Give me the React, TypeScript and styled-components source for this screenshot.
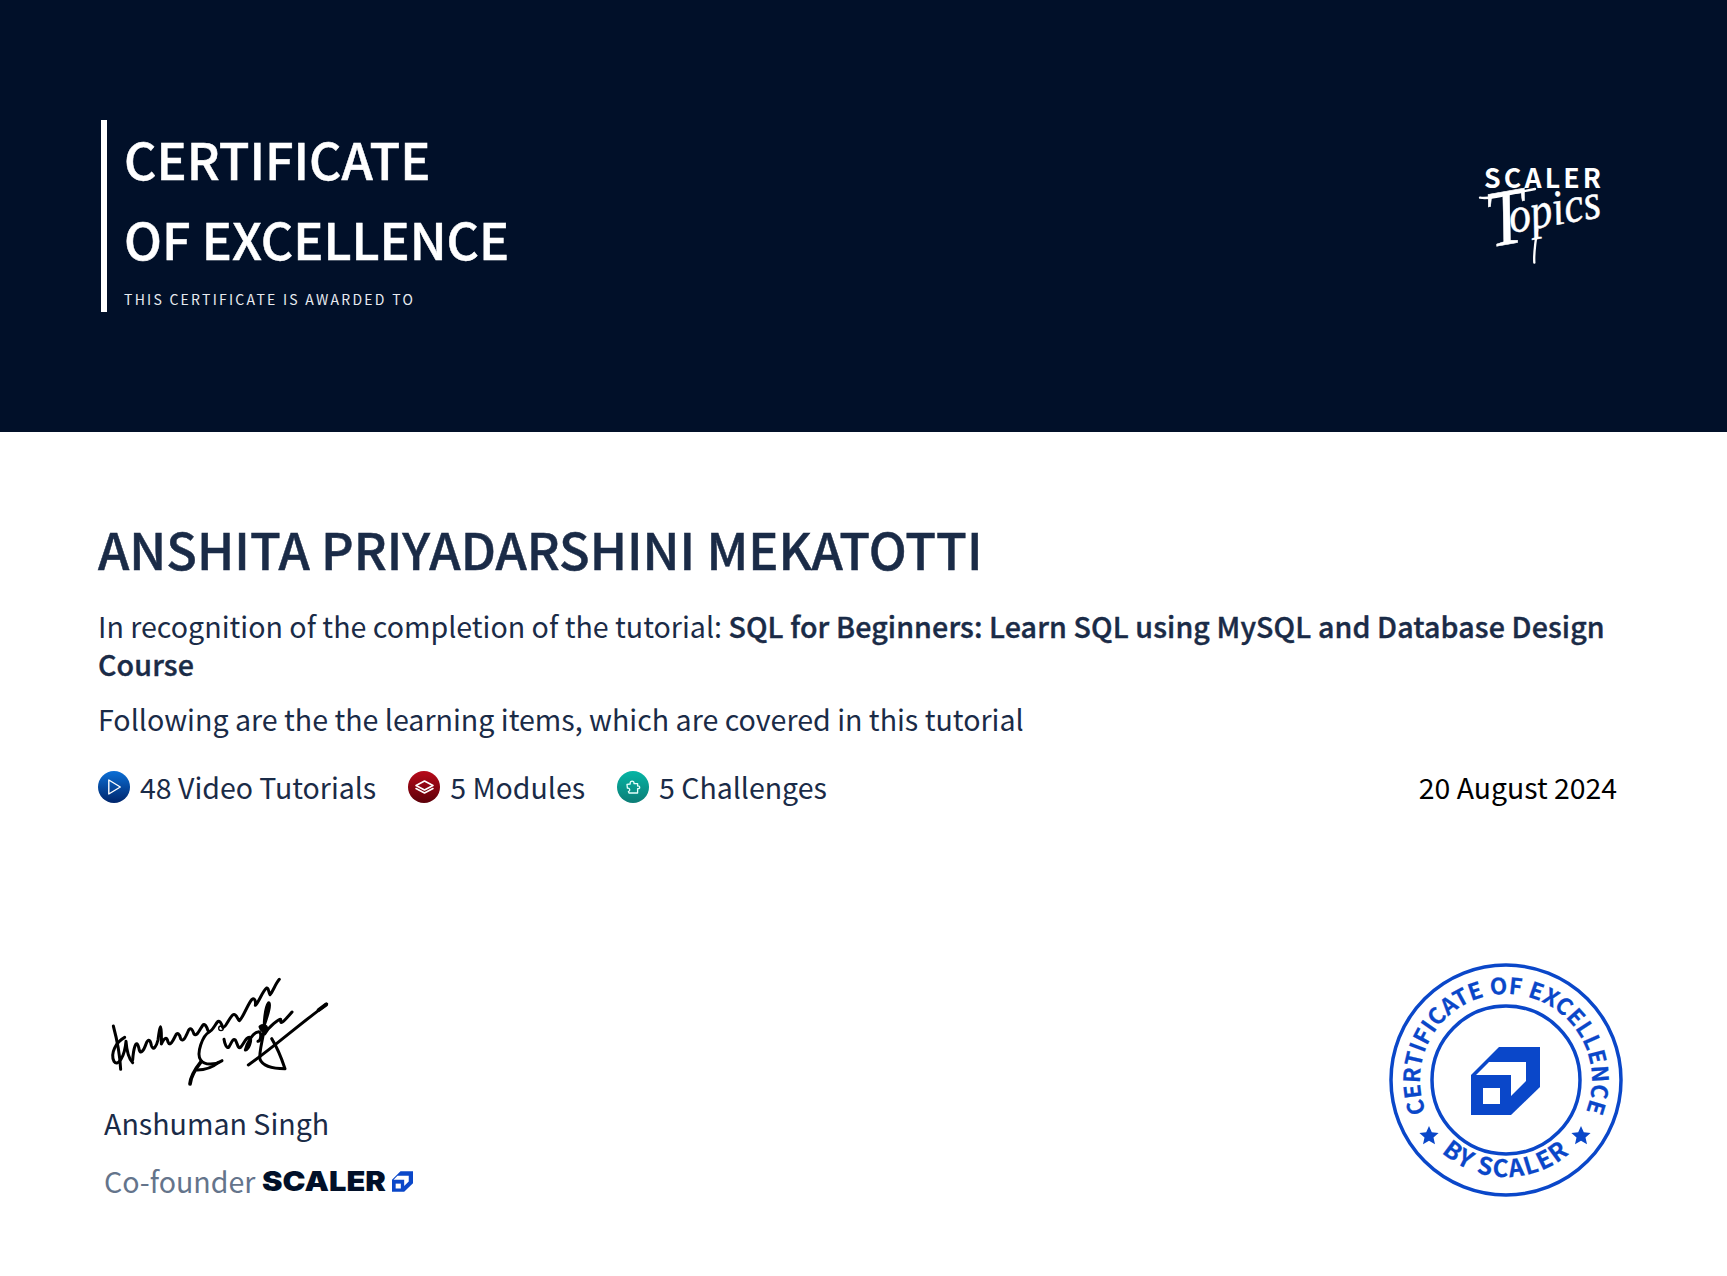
import React from 'react';
import styled, { createGlobalStyle } from 'styled-components';

const GlobalStyle = createGlobalStyle`
  html, body {
    margin: 0;
    padding: 0;
    background: #fff;
  }
  body {
    font-family: "Noto Sans CJK SC", "Noto Sans", sans-serif;
    color: #1a2b47;
  }
`;

const PlayIcon = () => (
  <svg width="32" height="32" viewBox="0 0 32 32">
    <defs>
      <linearGradient id="blueGrad" x1="0" y1="0" x2="0" y2="1">
        <stop offset="0" stopColor="#0b6fd6" />
        <stop offset="1" stopColor="#00256b" />
      </linearGradient>
    </defs>
    <circle cx="16" cy="16" r="16" fill="url(#blueGrad)" />
    <path d="M10.8 9 L22.3 16 L10.8 23 Z" fill="none" stroke="#fff" strokeWidth="1.4" strokeLinejoin="round" />
  </svg>
);

const LayersIcon = () => (
  <svg width="32" height="32" viewBox="0 0 32 32">
    <defs>
      <linearGradient id="redGrad" x1="0" y1="0" x2="0" y2="1">
        <stop offset="0" stopColor="#b80a1a" />
        <stop offset="1" stopColor="#5c0008" />
      </linearGradient>
    </defs>
    <circle cx="16" cy="16" r="16" fill="url(#redGrad)" />
    <path d="M16.5 10 L25 14.5 L16.5 19 L8 14.5 Z" fill="none" stroke="#fff" strokeWidth="1.6" strokeLinejoin="round" />
    <path d="M8 17.5 L16.5 22 L25 17.5" fill="none" stroke="#fff" strokeWidth="1.6" strokeLinejoin="round" strokeLinecap="round" />
  </svg>
);

const PuzzleIcon = () => (
  <svg width="32" height="32" viewBox="0 0 32 32">
    <defs>
      <linearGradient id="tealGrad" x1="0" y1="0" x2="0" y2="1">
        <stop offset="0" stopColor="#05b5a5" />
        <stop offset="1" stopColor="#0c7d76" />
      </linearGradient>
    </defs>
    <circle cx="16" cy="16" r="16" fill="url(#tealGrad)" />
    <path
      d="M13.2 12.6 C12.6 9.4 17.6 9.4 17 12.6 L20.6 12.6 L20.6 15 C23.4 14.6 23.4 18.2 20.6 17.6 L20.6 22 L12 22 L11.4 20.6 C13.6 19.8 13 16.6 10.4 17.2 L10 13.4 L13.2 13 Z"
      fill="none"
      stroke="#e6fffb"
      strokeWidth="1.3"
      strokeLinejoin="round"
    />
  </svg>
);

const ScalerTopicsLogo = () => (
  <LogoSvg width="160" height="120" viewBox="0 0 480 360">
    <text x="72" y="115" fill="#fff" fontFamily="'Noto Sans CJK SC', sans-serif" fontWeight="700" fontSize="80" letterSpacing="9.5">
      SCALER
    </text>
    <text
      fill="#fff"
      stroke="#fff"
      strokeWidth="1.5"
      fontFamily="'Liberation Serif', serif"
      fontStyle="italic"
      transform="translate(92 292) rotate(-10) scale(0.88 1)"
    >
      <tspan fontSize="240">T</tspan>
      <tspan fontSize="150" dx="-56" dy="-32">opics</tspan>
    </text>
    <path d="M60 143 C90 150 150 130 225 117" fill="none" stroke="#fff" strokeWidth="7" strokeLinecap="round" />
    <path d="M232 238 C226 275 221 310 223 338" fill="none" stroke="#fff" strokeWidth="7" strokeLinecap="round" />
  </LogoSvg>
);

const Signature = () => (
  <SignatureSvg width="260" height="140" viewBox="0 0 780 420">
    <g fill="none" stroke="#000" strokeWidth="9" strokeLinecap="round" strokeLinejoin="round">
      <path d="M70 198 C80 235 90 290 92 328" />
      <path d="M104 232 C78 246 60 280 72 304 C84 322 104 290 108 244 C110 270 118 298 128 308" />
      <path d="M128 300 C130 270 138 232 146 262 C150 290 162 270 168 252 C172 240 180 232 184 256 C190 276 200 256 204 240 C210 190 216 180 214 252 C222 236 230 226 234 246 C240 262 250 240 256 228 C262 214 268 222 272 236 C280 250 290 224 296 210 C302 200 308 210 312 222 C320 232 330 208 338 196 C344 188 350 200 354 212 C362 222 374 196 382 186 C388 178 394 190 398 202 C406 206 420 168 430 164 C438 160 442 176 448 182 C458 176 474 130 486 118 C494 112 498 124 496 136 C506 128 518 92 530 84 C536 82 536 100 540 104 C548 96 556 72 568 58" />
      <path d="M358 216 C338 226 318 280 332 300 C344 318 378 314 396 302" />
      <path d="M334 304 C318 324 302 348 300 372" strokeWidth="11" />
      <path d="M322 330 C345 330 370 320 385 308" />
      <circle cx="393" cy="205" r="7" strokeWidth="4" />
      <path d="M402 238 C404 252 410 266 416 262 C424 250 428 234 436 240 C442 250 444 268 452 262 C462 250 470 228 480 232 C486 242 476 268 466 270 C470 250 490 216 504 216 C516 212 514 242 504 244" />
      <path d="M524 192 C532 168 544 130 536 128 C526 140 520 190 524 222 C536 200 568 176 572 178 C572 190 570 198 606 156" />
      <path d="M475 315 C540 270 620 200 690 148 L710 132" />
      <path d="M686 150 L708 134" strokeWidth="12" />
      <path d="M522 210 C518 240 506 280 510 298 C520 322 560 326 585 326 C575 296 560 260 545 236" />
      <path d="M510 200 C516 196 530 194 530 206 C528 216 516 218 510 200 Z" fill="#000" />
    </g>
  </SignatureSvg>
);

const CubeShapes = () => (
  <>
    <path d="M0 28 L28 0 L69 0 L69 40 L40 68 L0 68 Z" fill="#0a47c9" />
    <path d="M5 28 L18 15 L55 15 L55 34 L40 49 L40 28 Z" fill="#fff" />
    <path d="M12 41 H29 V57 H12 Z" fill="#fff" />
  </>
);

const SmallCube = () => (
  <svg width="21" height="21" viewBox="0 0 69 68">
    <CubeShapes />
  </svg>
);

const Badge = () => (
  <BadgeSvg width="234" height="234" viewBox="0 0 234 234">
    <defs>
      <path id="badgeTop" d="M42.5 160 A86 86 0 1 1 191.5 160" />
      <path id="badgeBottom" d="M20 117 A97 97 0 0 0 214 117" />
    </defs>
    <circle cx="117" cy="117" r="115" fill="#fff" stroke="#0a47c9" strokeWidth="3.5" />
    <circle cx="117" cy="117" r="74" fill="none" stroke="#0a47c9" strokeWidth="3.5" />
    <BadgeText fontSize="22.5" letterSpacing="0.5">
      <textPath href="#badgeTop" startOffset="50%" textAnchor="middle">CERTIFICATE OF EXCELLENCE</textPath>
    </BadgeText>
    <BadgeText fontSize="24" letterSpacing="1.6">
      <textPath href="#badgeBottom" startOffset="50%" textAnchor="middle">BY SCALER</textPath>
    </BadgeText>
    <path d="M40 163 l2.8 6.2 6.8 .7 -5.1 4.6 1.5 6.7 -6 -3.4 -6 3.4 1.5 -6.7 -5.1 -4.6 6.8 -.7 Z" fill="#0a47c9" />
    <path d="M192 163 l2.8 6.2 6.8 .7 -5.1 4.6 1.5 6.7 -6 -3.4 -6 3.4 1.5 -6.7 -5.1 -4.6 6.8 -.7 Z" fill="#0a47c9" />
    <g transform="translate(82 84)">
      <CubeShapes />
    </g>
  </BadgeSvg>
);

const App: React.FC = () => (
  <>
    <GlobalStyle />
    <Page>
      <Header>
        <TitleBlock>
          <Title>
            CERTIFICATE
            <br />
            OF EXCELLENCE
          </Title>
          <Awarded>THIS CERTIFICATE IS AWARDED TO</Awarded>
        </TitleBlock>
        <ScalerTopicsLogo />
      </Header>
      <Body>
        <Name>ANSHITA PRIYADARSHINI MEKATOTTI</Name>
        <Recognition>
          In recognition of the completion of the tutorial:{' '}
          <strong>SQL for Beginners: Learn SQL using MySQL and Database Design Course</strong>
        </Recognition>
        <Following>Following are the the learning items, which are covered in this tutorial</Following>
        <StatsRow>
          <Stats>
            <Stat>
              <PlayIcon />
              48 Video Tutorials
            </Stat>
            <Stat>
              <LayersIcon />
              5 Modules
            </Stat>
            <Stat>
              <PuzzleIcon />
              5 Challenges
            </Stat>
          </Stats>
          <DateText>20 August 2024</DateText>
        </StatsRow>
      </Body>
      <Footer>
        <Signer>
          <Signature />
          <SignerName>Anshuman Singh</SignerName>
          <SignerRole>
            Co-founder
            <ScalerWord>SCALER</ScalerWord>
            <SmallCube />
          </SignerRole>
        </Signer>
        <Badge />
      </Footer>
    </Page>
  </>
);

export default App;

const Page = styled.div`
  width: 1727px;
  height: 1276px;
  overflow: hidden;
  display: flex;
  flex-direction: column;
`;

const Header = styled.header`
  height: 432px;
  flex: none;
  background: #011029;
  display: flex;
  align-items: center;
  justify-content: space-between;
  padding: 0 107px 0 101px;
  box-sizing: border-box;
`;

const LogoSvg = styled.svg`
  margin-bottom: 12px;
  overflow: visible;
`;

const TitleBlock = styled.div`
  border-left: 6px solid #fff;
  padding-left: 17px;
  height: 192px;
  box-sizing: border-box;
`;

const Title = styled.h1`
  margin: -2px 0 0;
  font-size: 50.3px;
  line-height: 80px;
  font-weight: 500;
  -webkit-text-stroke: 0.5px #fff;
  color: #fff;
`;

const Awarded = styled.div`
  margin-top: 11px;
  font-size: 14px;
  line-height: 20px;
  letter-spacing: 2.25px;
  color: #e8ebf0;
`;

const Body = styled.main`
  padding: 77px 110px 0 98px;
`;

const Name = styled.h2`
  margin: 0;
  font-size: 50.4px;
  line-height: 80px;
  font-weight: 500;
  -webkit-text-stroke: 0.5px #1a2b47;
  color: #1a2b47;
`;

const Recognition = styled.p`
  margin: 18px 0 0;
  font-size: 28.6px;
  line-height: 38px;
  color: #1a2b47;

  strong {
    font-weight: 500;
    letter-spacing: 0.12px;
    -webkit-text-stroke: 0.4px #1a2b47;
  }
`;

const Following = styled.p`
  margin: 17px 0 0;
  font-size: 28.6px;
  line-height: 38px;
  color: #1a2b47;
`;

const StatsRow = styled.div`
  margin-top: 29px;
  display: flex;
  align-items: center;
  justify-content: space-between;
`;

const Stats = styled.div`
  display: flex;
  align-items: center;
  gap: 32px;
`;

const Stat = styled.div`
  display: flex;
  align-items: center;
  gap: 10px;
  font-size: 28.5px;
  line-height: 40px;
  color: #1a2b47;
`;

const DateText = styled.div`
  font-size: 28.4px;
  line-height: 40px;
  color: #000;
`;

const Footer = styled.footer`
  flex: 1;
  display: flex;
  align-items: flex-end;
  justify-content: space-between;
  padding: 0 104px 75px 90px;
`;

const Signer = styled.div`
  display: flex;
  flex-direction: column;
  padding-left: 14px;
`;

const SignatureSvg = styled.svg`
  margin-left: -14px;
`;

const SignerName = styled.div`
  margin-top: 3px;
  font-size: 28.6px;
  line-height: 40px;
  color: #1a2b47;
`;

const SignerRole = styled.div`
  margin-top: 18px;
  display: flex;
  align-items: center;
  gap: 7px;
  font-size: 28.6px;
  line-height: 40px;
  color: #64748b;
`;

const ScalerWord = styled.span`
  display: inline-block;
  font-family: Inter, "Liberation Sans", sans-serif;
  font-weight: 900;
  font-size: 27.5px;
  color: #011029;
  transform: scaleX(1.12);
  transform-origin: left center;
  margin-right: 12px;
`;

const BadgeSvg = styled.svg`
  margin-bottom: 4px;
`;

const BadgeText = styled.text`
  fill: #0a47c9;
  stroke: #0a47c9;
  stroke-width: 0.25px;
  font-family: "Noto Sans CJK SC", sans-serif;
  font-weight: 700;
`;
